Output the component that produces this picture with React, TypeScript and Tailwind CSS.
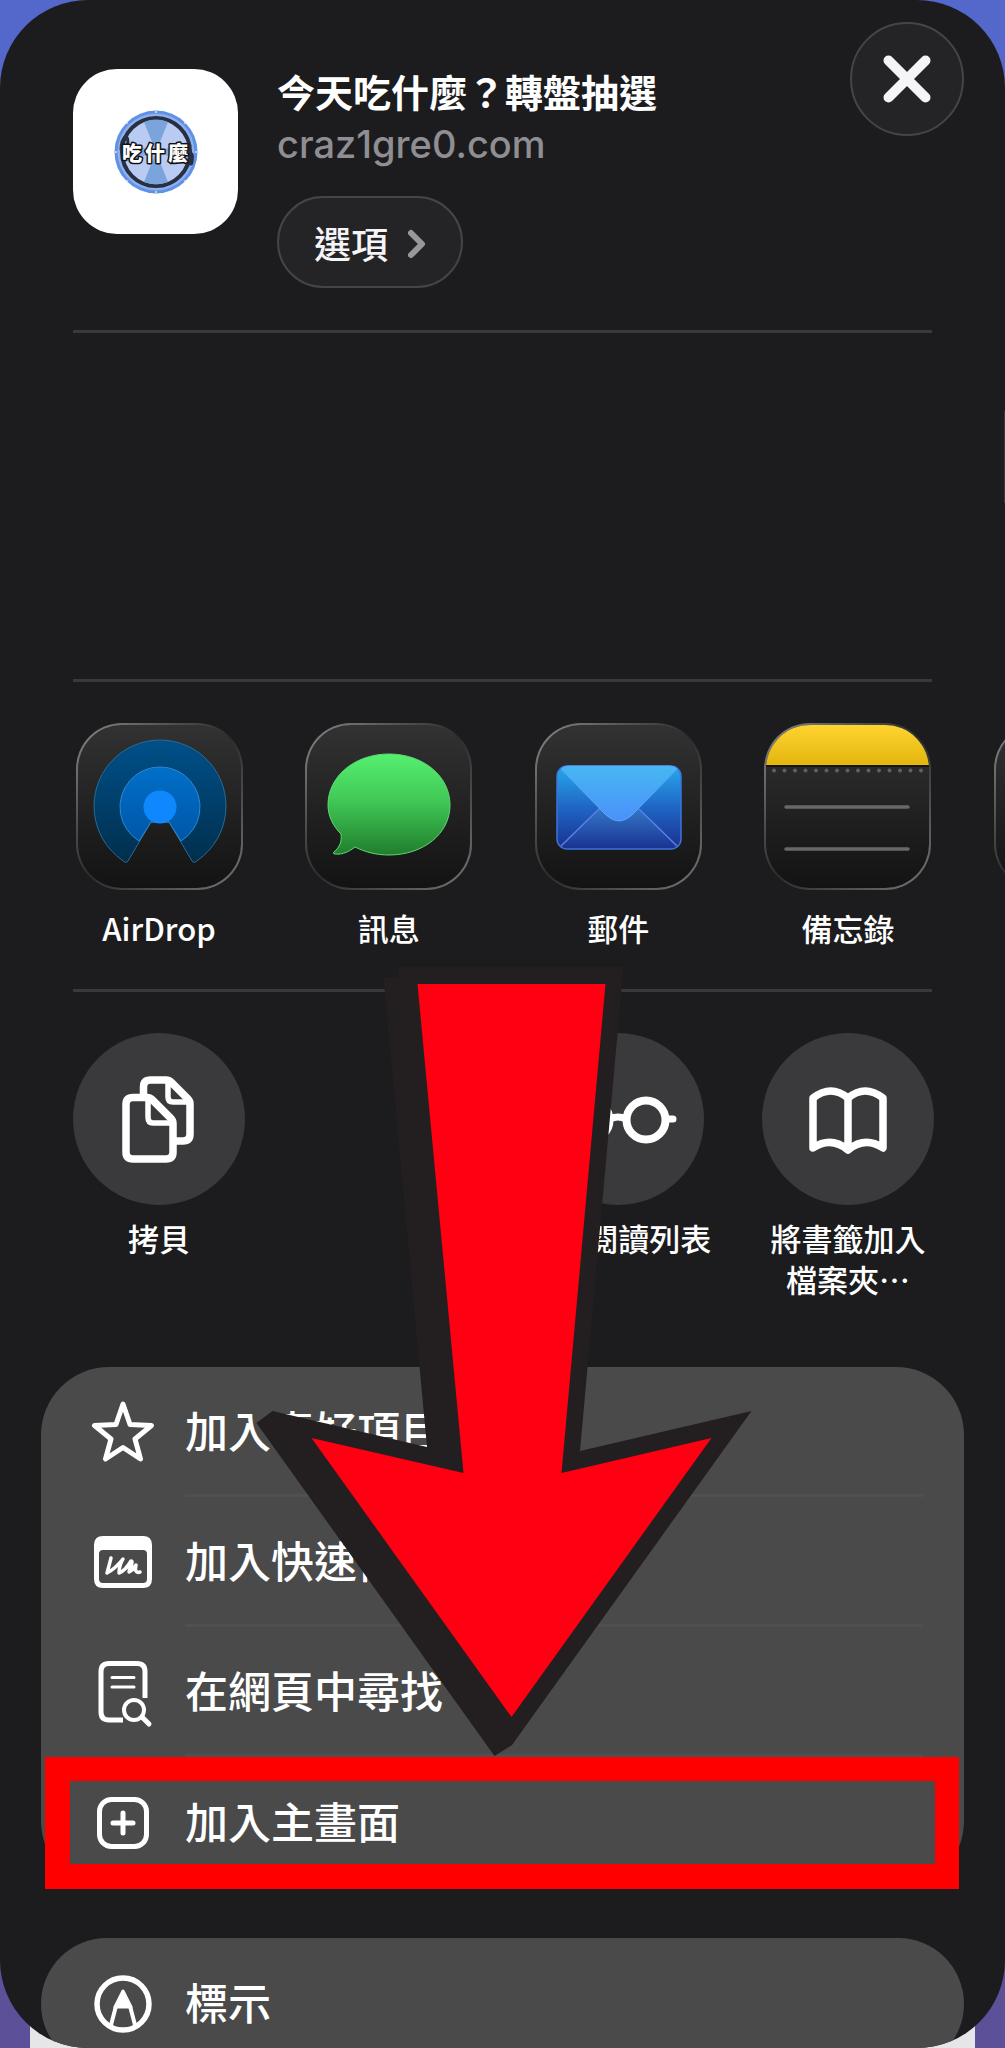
import type { ReactNode } from "react";

const CJK = "font-['Noto_Sans_CJK_TC',sans-serif]";

function WheelLogo() {
  return (
    <svg viewBox="0 0 84 84" className="size-[84px]" role="img" aria-label="吃什麼">
      <circle cx="42" cy="42" r="41.500" fill="#5f92e6" />
      <circle cx="42" cy="42" r="38.500" fill="#8fb0ee" />
      <circle cx="42" cy="42" r="34" fill="#b9cbf2" stroke="#272f40" strokeWidth="4" />
      <path d="M42 42 30 12a32 32 0 0 1 24 0ZM42 42 54 72a32 32 0 0 1-24 0Z" fill="#7ba3dc" />
      <path d="M42 42 11.500 32a32 32 0 0 0 0 20ZM42 42 72.500 32a32 32 0 0 1 0 20Z" fill="#86aae2" />
      <path d="M7 40c0-7 1-11 5-14 3 3 2 9-1 15" fill="none" stroke="#272f40" strokeWidth="3" />
      <path d="M74 44c6-5 7 2 5 10-2 3-5 1-5-2Z" fill="#272f40" />
      <path d="M42 34v14" stroke="#f0b08a" strokeWidth="2" />
      <g fill="#f2d9d0">
        <circle cx="42" cy="2" r="1" /><circle cx="42" cy="82" r="1" /><circle cx="2" cy="42" r="1" /><circle cx="82" cy="42" r="1" />
        <circle cx="13" cy="13" r="1" /><circle cx="71" cy="13" r="1" /><circle cx="13" cy="71" r="1" /><circle cx="71" cy="71" r="1" />
      </g>
      <g fontFamily="Noto Sans CJK TC, sans-serif" fontWeight="900" fontSize="20" textAnchor="middle" fill="#fff" stroke="#111" strokeWidth="3" strokeLinejoin="round" paintOrder="stroke">
        <text x="18" y="51">吃</text>
        <text x="41" y="51">什</text>
        <text x="64" y="51">麼</text>
      </g>
    </svg>
  );
}

function Tile({ children, className = "" }: { children?: ReactNode; className?: string }) {
  return (
    <span className={`block size-[167px] rounded-[46px] bg-linear-135 from-[#8a8a8a] via-[#2c2c2c] to-[#777] p-[2px] ${className}`}>
      <span className="block size-full overflow-hidden rounded-[44px] bg-linear-to-b from-[#323232] to-[#131313]">{children}</span>
    </span>
  );
}

function AirDropIcon() {
  return (
    <svg viewBox="0 0 163 163" className="size-full" aria-hidden="true">
      <defs>
        <linearGradient id="adOuter" x1="0" y1="0" x2="0" y2="1"><stop offset="0" stopColor="#00508a" /><stop offset="1" stopColor="#002f4c" /></linearGradient>
        <linearGradient id="adMid" x1="0" y1="0" x2="0" y2="1"><stop offset="0" stopColor="#0070c8" /><stop offset="1" stopColor="#0056a8" /></linearGradient>
      </defs>
      <path d="M50 136 Q48 139 44 135 A66 66 0 1 1 120 135 Q116 139 114 136 L91 97 L73 97 Z" fill="url(#adOuter)" stroke="#2a6b95" strokeWidth="1" />
      <path d="M61 116 A40 40 0 1 1 103 116 L91 97 L73 97 Z" fill="url(#adMid)" stroke="#2d87d0" strokeWidth="1" />
      <circle cx="82" cy="82" r="16.500" fill="#0f88fd" />
    </svg>
  );
}

function MessagesIcon() {
  return (
    <svg viewBox="0 0 163 163" className="size-full" aria-hidden="true">
      <defs>
        <linearGradient id="msg" x1="0" y1="0" x2="0" y2="1"><stop offset="0" stopColor="#55f070" /><stop offset="0.450" stopColor="#41c957" /><stop offset="1" stopColor="#217e2d" /></linearGradient>
      </defs>
      <path d="M82 29c34 0 61 22 61 51s-27 50-61 50c-13 0-24-3-34-8-5 4-12 8-20 7-2 0-2-1-1-2 6-5 8-11 7-18-8-8-13-18-13-29 0-29 27-51 61-51Z" fill="url(#msg)" stroke="#5fd873" strokeWidth="1" />
    </svg>
  );
}

function MailIcon() {
  return (
    <svg viewBox="0 0 163 163" className="size-full" aria-hidden="true">
      <defs>
        <linearGradient id="mailBody" x1="0" y1="0" x2="0" y2="1"><stop offset="0" stopColor="#27a9ec" /><stop offset="0.500" stopColor="#1f66c4" /><stop offset="1" stopColor="#1a2f8e" /></linearGradient>
        <linearGradient id="mailFlap" x1="0" y1="0" x2="0" y2="1"><stop offset="0" stopColor="#47b7f2" /><stop offset="1" stopColor="#4a90fa" /></linearGradient>
        <linearGradient id="mailLow" x1="0" y1="0" x2="0" y2="1"><stop offset="0" stopColor="#3478c8" /><stop offset="1" stopColor="#1a3392" /></linearGradient>
      </defs>
      <rect x="20" y="41" width="124" height="83" rx="10" fill="url(#mailBody)" stroke="#3c74dc" strokeWidth="1.500" />
      <path d="M24 121 63 83h38l39 38q-3 2-6 2H30q-4 0-6-2Z" fill="url(#mailLow)" />
      <path d="M24 121 63 83M140 121 101 83" stroke="#5a80e8" strokeWidth="1.500" />
      <path d="M24 44q3-3 7-3h102q4 0 7 3L95 90q-13 12-26 0Z" fill="url(#mailFlap)" stroke="#5aa8f8" strokeWidth="1" />
    </svg>
  );
}

function NotesIcon() {
  return (
    <svg viewBox="0 0 163 163" className="size-full" aria-hidden="true">
      <defs>
        <linearGradient id="notesTop" x1="0" y1="0" x2="0" y2="1"><stop offset="0" stopColor="#ffd430" /><stop offset="1" stopColor="#e3b60e" /></linearGradient>
      </defs>
      <rect width="163" height="40" fill="url(#notesTop)" />
      <rect y="40" width="163" height="2" fill="#171512" />
      <path d="M8 45.500h148" stroke="#606060" strokeWidth="4" strokeLinecap="round" strokeDasharray="0 10.500" />
      <path d="M20 82h122M20 124h122" stroke="#686868" strokeWidth="3.500" strokeLinecap="round" />
    </svg>
  );
}

function CopyIcon() {
  return (
    <svg viewBox="0 0 172 172" className="size-full" fill="none" stroke="#fff" strokeWidth="7.500" strokeLinejoin="round" aria-hidden="true">
      <path d="M70.500 62V54q0-7 7-7H93q3 0 5 2l17 17q2 2 2 5v30q0 7-7 7h-7" />
      <path d="M95 48V64q0 5 5 5h17" strokeWidth="5.500" />
      <path d="M60 64.500h14q3 0 5 2l19 19q2 2 2 5V119q0 7-7 7H60q-7 0-7-7V71.500q0-7 7-7Z" />
      <path d="M75 66V84q0 6 5 6h19" strokeWidth="5.500" />
    </svg>
  );
}

function GlassesIcon() {
  return (
    <svg viewBox="0 0 172 172" className="size-full" fill="none" stroke="#fff" strokeWidth="8" strokeLinecap="round" aria-hidden="true">
      <circle cx="58" cy="87" r="19.500" />
      <circle cx="114" cy="87" r="19.500" />
      <path d="M78 86q8-4 16 0M135 86h6M37 86h-6" strokeWidth="7" />
    </svg>
  );
}

function BookIcon() {
  return (
    <svg viewBox="0 0 172 172" className="size-full" fill="none" stroke="#fff" strokeWidth="7.500" strokeLinecap="round" strokeLinejoin="round" aria-hidden="true">
      <path d="M86 65Q69 51 51 65V115Q69 103 86 117Q103 103 121 115V65Q103 51 86 65V116" />
    </svg>
  );
}

function StarIcon() {
  return (
    <svg viewBox="0 0 64 64" className="size-16" fill="none" stroke="#fff" strokeWidth="5" strokeLinejoin="round" aria-hidden="true">
      <path d="M32 4 39 24.500 60.500 25.500 44 39 49.500 59 32 47.500 14.500 59 20 39 3.500 25.500 25 24.500Z" />
    </svg>
  );
}

function QuickNoteIcon() {
  return (
    <svg viewBox="0 0 64 64" className="size-16" fill="none" stroke="#fff" aria-hidden="true">
      <path fillRule="evenodd" fill="#fff" stroke="none" d="M12 6H52q9 0 9 9V49q0 9-9 9H12q-9 0-9-9V15q0-9 9-9ZM12 20q-4 0-4 4V49q0 4 4 4H52q4 0 4-4V24q0-4-4-4Z" />
      <path d="M20 28Q18 36 16 43 24 39 32 29 28 36 28 43 34 41 40 31 42 31 40 36 38 39 38 42 42 40 45 35 43 44 49 42" strokeWidth="3.500" strokeLinecap="round" strokeLinejoin="round" />
    </svg>
  );
}

function FindIcon() {
  return (
    <svg viewBox="0 0 64 64" className="size-16 overflow-visible" fill="none" stroke="#fff" strokeWidth="5" strokeLinecap="round" aria-hidden="true">
      <path d="M32 60H18q-8 0-8-8V11.500q0-8 8-8h28q8 0 8 8V38" strokeLinecap="butt" />
      <path d="M21 17.500H43M21 27H43" strokeWidth="3" />
      <circle cx="43" cy="50" r="10" strokeWidth="4" />
      <path d="M51 57 58 64" />
    </svg>
  );
}

function AddIcon() {
  return (
    <svg viewBox="0 0 64 64" className="size-16" fill="none" stroke="#fff" strokeWidth="5" strokeLinecap="round" aria-hidden="true">
      <rect x="8.500" y="8.500" width="47" height="47" rx="12" />
      <path d="M32 22V42M22 32H42" />
    </svg>
  );
}

function MarkupIcon() {
  return (
    <svg viewBox="0 0 64 64" className="size-16" fill="none" stroke="#fff" aria-hidden="true">
      <circle cx="32" cy="32" r="26" strokeWidth="5.500" />
      <path d="M32 19 40 35H24Z" fill="#fff" strokeWidth="3" strokeLinejoin="round" />
      <path d="M25 34 20 53M39 34 44 53" strokeWidth="4" />
    </svg>
  );
}

const apps = [
  { name: "AirDrop", icon: <AirDropIcon /> },
  { name: "訊息", icon: <MessagesIcon /> },
  { name: "郵件", icon: <MailIcon /> },
  { name: "備忘錄", icon: <NotesIcon /> },
];

const rowGrid = "-mr-0.5 grid auto-cols-[172px] grid-flow-col items-start gap-x-[calc((100%-688px)/3)]";
const caption = "text-[31px] leading-[41px] font-medium whitespace-nowrap text-white";

function Divider() {
  return <hr className="h-[3px] shrink-0 border-0 bg-[#39393b]" />;
}

function RoundAction({ icon, children }: { icon: ReactNode; children: ReactNode }) {
  return (
    <button className="flex flex-col items-center gap-3">
      <span className="size-[172px] rounded-full bg-[#3a3a3c]">{icon}</span>
      <span className={caption}>{children}</span>
    </button>
  );
}

function ListRow({ icon, label, last, highlighted }: { icon: ReactNode; label: string; last?: boolean; highlighted?: boolean }) {
  return (
    <li className="relative">
      <button className={`flex w-full items-stretch gap-[30px] pr-[41px] pl-[50px] text-left ${last ? "h-[132px]" : "h-[130px]"}`}>
        <span className="flex shrink-0 items-center">{icon}</span>
        <span className={`flex flex-1 items-center text-[43px] leading-[60px] font-medium text-white ${last ? "pb-[7px]" : "border-b-[3px] border-[#505052] pb-[3px]"}`}>
          {label}
        </span>
      </button>
      {highlighted && <span className="pointer-events-none absolute inset-y-0 right-[5px] left-1 border-[25px] border-t-[24px] border-r-[24px] border-[#ff0000]" />}
    </li>
  );
}

function ArrowOverlay() {
  return (
    <svg viewBox="253 967 499 790" className="pointer-events-none absolute top-[967px] left-1/2 h-[790px] w-[499px] -translate-x-1/2" aria-hidden="true">
      <path d="M398 967H623L579.500 1451 751 1411 511.500 1745 494 1756 256 1423 272 1411 426.500 1447 383 978H398Z" fill="#231f20" />
      <path d="M417 984H605L561 1473 711 1438 511 1717 311 1438 463 1473Z" fill="#ff0012" />
    </svg>
  );
}

export default function App() {
  return (
    <div className={`relative h-screen overflow-hidden bg-linear-to-b from-[#5468cc] to-[#5c5098] ${CJK}`} lang="zh-Hant-TW">
      <div className="absolute inset-x-[30px] bottom-0 h-8 bg-[#e6e6e8]" />
      <main className="relative flex h-full flex-col overflow-hidden rounded-[88px] bg-[#1c1c1e]">
        <header className="flex items-start pt-[22px] pr-[41px] pl-[73px]">
          <div className="mt-[47px] flex h-[165px] w-[165px] shrink-0 items-center justify-center rounded-[44px] bg-white">
            <WheelLogo />
          </div>
          <div className="mt-[44px] ml-[39px] flex flex-1 flex-col items-start">
            <h1 className="text-[38px] leading-[50px] font-bold text-white">今天吃什麼？轉盤抽選</h1>
            <p className="font-['Inter',sans-serif] text-[38px] leading-[56px] font-medium text-[#8e8e93]">craz1gre0.com</p>
            <button className="mt-6 flex h-[92px] items-center gap-5 rounded-full border-2 border-[#454548] bg-[#242426] px-[35px] pt-1 text-[37px] font-medium text-[#f5f5f7]">
              選項
              <svg viewBox="0 0 18 30" className="h-[30px] w-[18px]" fill="none" stroke="#98989c" strokeWidth="6" strokeLinecap="round" strokeLinejoin="round" aria-hidden="true">
                <path d="M3 4 14 15 3 26" />
              </svg>
            </button>
          </div>
          <button aria-label="關閉" className="flex size-[114px] shrink-0 items-center justify-center rounded-full border-2 border-[#454548] bg-[#242426]">
            <svg viewBox="0 0 48 48" className="size-12" stroke="#f5f5f7" strokeWidth="10" strokeLinecap="round" aria-hidden="true">
              <path d="M5.500 5.500 42.500 42.500M42.500 5.500 5.500 42.500" />
            </svg>
          </button>
        </header>

        <div className="flex flex-col px-[73px] pt-[42px]">
          <Divider />
          <div className="relative h-[346px]">
            <span className="absolute top-[78px] -right-[73px] h-[92px] w-px bg-[#3a3a3c]" />
          </div>
          <Divider />
          <section className={`${rowGrid} pt-[41px] pb-[41px]`}>
            {apps.map((app) => (
              <button key={app.name} className="flex flex-col items-center gap-[17px]">
                <Tile>{app.icon}</Tile>
                <span className={caption}>{app.name}</span>
              </button>
            ))}
            <Tile className="ml-[2px]" />
          </section>
          <Divider />
          <section className={`${rowGrid} h-[334px] pt-[41px]`}>
            <RoundAction icon={<CopyIcon />}>拷貝</RoundAction>
            <div />
            <RoundAction icon={<GlassesIcon />}>加入閱讀列表</RoundAction>
            <RoundAction icon={<BookIcon />}>
              將書籤加入
              <br />
              檔案夾⋯
            </RoundAction>
          </section>
        </div>

        <div className="mt-[41px] flex flex-col gap-[49px] px-[41px]">
          <ul className="rounded-[68px] bg-[#4a4a4b]">
            <ListRow icon={<StarIcon />} label="加入喜好項目" />
            <ListRow icon={<QuickNoteIcon />} label="加入快速備忘錄" />
            <ListRow icon={<FindIcon />} label="在網頁中尋找" />
            <ListRow icon={<AddIcon />} label="加入主畫面" last highlighted />
          </ul>
          <ul className="rounded-[68px] bg-[#4a4a4b]">
            <ListRow icon={<MarkupIcon />} label="標示" last />
          </ul>
        </div>

        <ArrowOverlay />
      </main>
    </div>
  );
}
